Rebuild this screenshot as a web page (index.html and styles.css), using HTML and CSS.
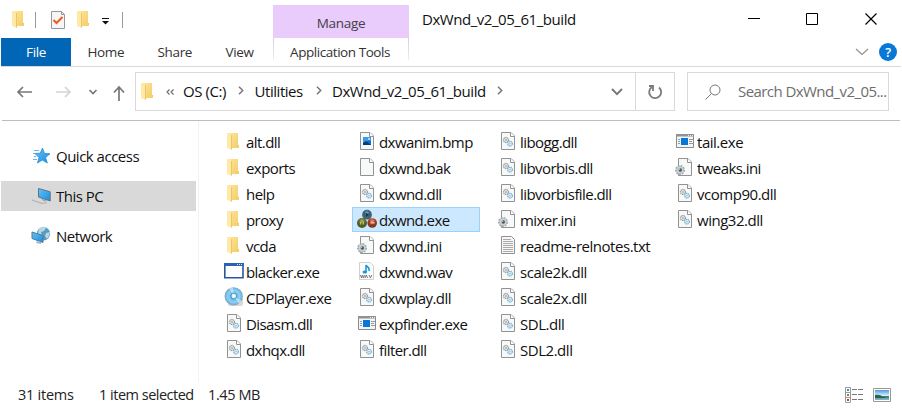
FILE: index.html
```html
<!DOCTYPE html>
<html lang="en">
<head>
<meta charset="utf-8">
<title>DxWnd_v2_05_61_build</title>
<link rel="stylesheet" href="styles.css">
</head>
<body>
<svg class="defs" width="0" height="0">
  <defs>
    <linearGradient id="gold" x1="0" x2="1" y1="0" y2="1"><stop offset="0" stop-color="#ffe599"/><stop offset="1" stop-color="#f3cc65"/></linearGradient>
    <linearGradient id="blue" x1="0" x2="1" y1="0" y2="1"><stop offset="0" stop-color="#5fc4f8"/><stop offset="1" stop-color="#1e8be0"/></linearGradient>
    <radialGradient id="disc"><stop offset="0" stop-color="#fff"/><stop offset=".3" stop-color="#5fb4e6"/><stop offset=".65" stop-color="#8fd0f4"/><stop offset="1" stop-color="#6fa5c4"/></radialGradient>
    <radialGradient id="b1" cy=".3"><stop offset="0" stop-color="#7ba6c0"/><stop offset=".55" stop-color="#31607c"/><stop offset="1" stop-color="#4a6272"/></radialGradient>
    <radialGradient id="b2" cy=".3"><stop offset="0" stop-color="#b0b080"/><stop offset=".6" stop-color="#5f6e22"/><stop offset="1" stop-color="#4f5a2c"/></radialGradient>
    <radialGradient id="b3" cy=".3"><stop offset="0" stop-color="#e09a86"/><stop offset=".6" stop-color="#b33d1c"/><stop offset="1" stop-color="#7c3a28"/></radialGradient>
    <linearGradient id="sky" x1="0" x2="0" y1="0" y2="1"><stop offset="0" stop-color="#4f9be0"/><stop offset=".55" stop-color="#d5ecf8"/><stop offset=".6" stop-color="#3d7a62"/><stop offset="1" stop-color="#8db9d8"/></linearGradient>
  </defs>
  <symbol id="folder" viewBox="0 0 20 20"><path d="M5 2h9v12h1v3H7z" fill="url(#gold)"/><path d="M3 2h2l3 2v15l-5-2z" fill="#ffe9a6"/><path d="M7.500 4v14.500M14 14.500h1" stroke="#e8c66c" fill="none"/></symbol>
  <symbol id="sheet" viewBox="0 0 20 20"><path d="M3.500 1.500h9.500l3.500 3.500v13.500h-13z" fill="#f7f8f8" stroke="#929292"/><path d="M12.500 1.500v4h4" fill="#fff" stroke="#929292"/></symbol>
  <symbol id="dll" viewBox="0 0 20 20"><use href="#sheet"/><circle cx="8" cy="9" r="2.500" fill="#e8eaec" stroke="#959da2" stroke-width="1.300" stroke-dasharray="1.300 .5"/><circle cx="8" cy="9" r=".8" fill="#888"/><circle cx="12" cy="12.700" r="2.300" fill="#edf6fb" stroke="#75aed0" stroke-width="1.300" stroke-dasharray="1.200 .5"/><circle cx="12" cy="12.700" r=".7" fill="#75a5c0"/></symbol>
  <symbol id="bmp" viewBox="0 0 20 20"><use href="#sheet"/><path d="M6 6h8v8H6z" fill="#1471c8"/><path d="M6 6h8v4l-2-1-3 2-3 1z" fill="#3b9bea"/><path d="M6 14v-2l3-2 5 4z" fill="#083d76"/><circle cx="12" cy="8" r="1" fill="#cdefff"/></symbol>
  <symbol id="ini" viewBox="0 0 20 20"><use href="#sheet"/><circle cx="5" cy="13" r="4" fill="#c3cbd0" stroke="#9ca7ae" stroke-width="2" stroke-dasharray="1.700 1"/><circle cx="5" cy="13" r="3.500" fill="#c9d0d4"/><circle cx="5.300" cy="13" r="1.700" fill="#4c5459"/><circle cx="4.600" cy="12.300" r=".7" fill="#ccc"/></symbol>
  <symbol id="txt" viewBox="0 0 20 20"><path d="M3.500 1.500h10l3 3v14h-13z" fill="#f7f7f7" stroke="#929292"/><path d="M5 4.500h8M5 6.500h10M5 8.500h10M5 10.500h10M5 12.500h10M5 14.500h10M5 16.500h10" stroke="#aaa"/></symbol>
  <symbol id="wav" viewBox="0 0 20 20"><path d="M2.500 1.500h10.500l3.500 3.500v13.500h-14z" fill="#fbfbfb" stroke="#d0d0d0"/><path d="M9 11V4c.5 2 4 2 3 6" fill="none" stroke="#1593dc" stroke-width="1.500"/><ellipse cx="7.800" cy="11" rx="2.200" ry="1.600" fill="#1695e0"/><path d="M3.500 14l1 3 1-3 1 3 1-3M8 17l1.300-3 1.300 3M12 14l1.400 3 1.400-3" fill="none" stroke="#777"/></symbol>
  <symbol id="exe" viewBox="0 0 20 20"><path d="M1.500 3.500h17v13h-17z" fill="#f4f5f6" stroke="#858b8f"/><path d="M1 3h18v2.500H1z" fill="#8c9296"/><path d="M13 4.500h1M15 4.500h1M17 4.500h1" stroke="#eee"/><path d="M6 7h7v7H6z" fill="#0878d8"/><path d="M3 8.500h2M3 10.500h2M3 12.500h2M14 8.500h4M14 10.500h3M14 12.500h4" stroke="#999"/></symbol>
  <symbol id="win" viewBox="0 0 20 20"><path d="M.8 2.800h18.200v14H.8z" fill="#fff" stroke="#27589f" stroke-width="1.600"/><path d="M0 2h20v3H0z" fill="#2863b5"/><path d="M13 3.500h1M15 3.500h1M17 3.500h1" stroke="#d8e8fa"/></symbol>
  <symbol id="cd" viewBox="0 0 20 20"><rect x="4" y="10" width="15" height="9" rx="2" fill="#dcd9d5"/><circle cx="9.700" cy="9.300" r="9.100" fill="url(#disc)"/><path d="M10 9L5 1.500A9 9 0 0 1 9 .3zM10 9l8 5a9 9 0 0 1-3 3z" fill="#c4e8fb" opacity=".7"/><circle cx="9.800" cy="9" r="2.800" fill="#e2f3fc" stroke="#479acc"/><circle cx="9.800" cy="9" r="1" fill="#fff"/></symbol>
  <symbol id="balls" viewBox="0 0 20 20"><circle cx="10" cy="5.700" r="4.900" fill="url(#b1)"/><circle cx="5" cy="14" r="5" fill="url(#b2)"/><circle cx="15.200" cy="14" r="4.800" fill="url(#b3)"/><path d="M9 3.800v4l3-2z" fill="#17394e"/><path d="M3.700 12.500v3M6.300 12.500v3" stroke="#c9cd75"/><path d="M13.500 13.800h4" stroke="#f0bba9" stroke-width="1.500"/></symbol>
  <symbol id="star" viewBox="0 0 20 20"><path d="M11.500 2l2 5.500 5.500.2-4.400 3.800 1.700 5.500-5-3-4.800 3 1.500-5.500-4-4 5.200-.3z" fill="url(#blue)" stroke="#258bd0" stroke-width=".8"/><path d="M3 4.500h5M2 7.500h2M3 10.500h2M2 13.500h4" stroke="#62b9ed"/></symbol>
  <symbol id="pc" viewBox="0 0 20 20"><path d="M7.500 2.500l11.700 3.300v9.200L7.500 11z" fill="url(#blue)" stroke="#5d7487"/><path d="M11 13.500l4 1.500" stroke="#8b9aa4"/><path d="M1 14l10 3.500 5-1" fill="none" stroke="#a9b0b4" stroke-width="1.300" stroke-dasharray="2 .5"/></symbol>
  <symbol id="net" viewBox="0 0 20 20"><circle cx="12.500" cy="7.700" r="6.700" fill="#5a9abc"/><path d="M8 3q4-4 7-1l-2 3-3 1 1 3-4-1zM15 7l4-1q0 4-3 7l-2-3z" fill="#b6d7e3"/><path d="M1 6l11 3.500v7L1 12.500z" fill="url(#blue)" stroke="#557b98"/><path d="M6 15l-1 2 5 1v-2" fill="#abb6bd"/></symbol>
</svg>

<div class="window">
  <header class="top">
    <div class="titlebar">
      <div class="quick">
        <svg class="q-folder" width="20" height="20"><use href="#folder"/></svg>
        <i class="sep"></i>
        <svg class="q-check" width="14" height="18" viewBox="0 0 14 18"><path d="M.5.500h10l3 3v14H.5z" fill="#f5f6f7" stroke="#989898"/><path d="M10.500.500v3h3" fill="none" stroke="#989898"/><path d="M2.500 9l3 3L11.500 6" fill="none" stroke="#ee5a1c" stroke-width="2"/></svg>
        <svg class="q-folder2" width="20" height="20"><use href="#folder"/></svg>
        <svg class="q-more" width="7" height="7" viewBox="0 0 7 7"><path d="M0 .5h7" stroke="#111"/><path d="M0 3h7L3.500 6.500z" fill="#111"/></svg>
        <i class="sep"></i>
      </div>
      <div class="manage"><span>Manage</span></div>
      <h1 class="title">DxWnd_v2_05_61_build</h1>
      <svg class="winctl" width="130" height="14" viewBox="0 0 130 14" fill="none" stroke="#000"><path d="M0 6.500h12"/><path d="M58.500 1.500h11v11h-11z"/><path d="M117.500 1.500l11 11m0-11l-11 11" stroke-width="1.200"/></svg>
    </div>
    <nav class="tabs">
      <span class="tab file">File</span><span class="tab home">Home</span><span class="tab share">Share</span><span class="tab view">View</span><span class="tab tools">Application Tools</span>
      <svg class="ribbon-toggle" width="14" height="8" viewBox="0 0 14 8"><path d="M1 1l6 5.500L13 1" fill="none" stroke="#929292" stroke-width="1.200"/></svg>
      <span class="help">?</span>
    </nav>
  </header>

  <div class="navrow">
    <svg class="arrows" width="112" height="20" viewBox="0 0 112 20" fill="none" stroke-width="1.700"><path d="M16 10H2M7 5L2 10l5 5" stroke="#777"/><path d="M40 10h14M49 5l5 5-5 5" stroke="#d4d4d4"/><path d="M73.500 8l3.500 3.500L80.500 8" stroke="#777"/><path d="M103 19V5M98 10.500l5-5.500 5 5.500" stroke="#777"/></svg>
    <div class="address">
      <svg class="a-folder" width="20" height="20"><use href="#folder"/></svg>
      <svg class="a-back" width="8" height="6" viewBox="0 0 8 6" fill="none" stroke="#666" stroke-width="1.100"><path d="M3.500.5L1 3l2.500 2.500M7.500.5L5 3l2.500 2.500"/></svg>
      <span class="crumb c1">OS (C:)</span>
      <svg class="chev" width="6" height="9" viewBox="0 0 6 9"><path d="M1 .8l3.700 3.700L1 8.200" fill="none" stroke="#777" stroke-width="1.500"/></svg>
      <span class="crumb c2">Utilities</span>
      <svg class="chev" width="6" height="9" viewBox="0 0 6 9"><path d="M1 .8l3.700 3.700L1 8.200" fill="none" stroke="#777" stroke-width="1.500"/></svg>
      <span class="crumb c3">DxWnd_v2_05_61_build</span>
      <svg class="chev" width="6" height="9" viewBox="0 0 6 9"><path d="M1 .8l3.700 3.700L1 8.200" fill="none" stroke="#777" stroke-width="1.500"/></svg>
      <svg class="drop" width="12" height="8" viewBox="0 0 12 8"><path d="M1 1l5 5.200L11 1" fill="none" stroke="#777" stroke-width="1.900"/></svg>
      <span class="refresh"><svg width="16" height="16" viewBox="0 0 16 16" fill="none" stroke="#7b7b7b" stroke-width="1.800"><path d="M12 3.500a6 6 0 1 1-7-.5"/><path d="M2 2h4v5"/></svg></span>
    </div>
    <div class="search"><svg width="16" height="16" viewBox="0 0 16 16" fill="none" stroke="#777"><circle cx="10" cy="6" r="5"/><path d="M6.500 9.500L.5 15.500"/></svg><span>Search DxWnd_v2_05...</span></div>
  </div>

  <main class="body">
    <aside class="side">
      <div class="place"><svg width="20" height="20"><use href="#star"/></svg><span>Quick access</span></div>
      <div class="place active"><svg width="20" height="20"><use href="#pc"/></svg><span>This PC</span></div>
      <div class="place"><svg width="20" height="20"><use href="#net"/></svg><span>Network</span></div>
    </aside>
    <section class="files">
      <div class="file-item"><svg><use href="#folder"/></svg><span>alt.dll</span></div>
      <div class="file-item"><svg><use href="#folder"/></svg><span>exports</span></div>
      <div class="file-item"><svg><use href="#folder"/></svg><span>help</span></div>
      <div class="file-item"><svg><use href="#folder"/></svg><span>proxy</span></div>
      <div class="file-item"><svg><use href="#folder"/></svg><span>vcda</span></div>
      <div class="file-item"><svg><use href="#win"/></svg><span>blacker.exe</span></div>
      <div class="file-item"><svg><use href="#cd"/></svg><span>CDPlayer.exe</span></div>
      <div class="file-item"><svg><use href="#dll"/></svg><span>Disasm.dll</span></div>
      <div class="file-item"><svg><use href="#dll"/></svg><span>dxhqx.dll</span></div>
      <div class="file-item"><svg><use href="#bmp"/></svg><span>dxwanim.bmp</span></div>
      <div class="file-item"><svg><use href="#sheet"/></svg><span>dxwnd.bak</span></div>
      <div class="file-item"><svg><use href="#dll"/></svg><span>dxwnd.dll</span></div>
      <div class="file-item selected"><svg><use href="#balls"/></svg><span>dxwnd.exe</span></div>
      <div class="file-item"><svg><use href="#ini"/></svg><span>dxwnd.ini</span></div>
      <div class="file-item"><svg><use href="#wav"/></svg><span>dxwnd.wav</span></div>
      <div class="file-item"><svg><use href="#dll"/></svg><span>dxwplay.dll</span></div>
      <div class="file-item"><svg><use href="#exe"/></svg><span>expfinder.exe</span></div>
      <div class="file-item"><svg><use href="#dll"/></svg><span>filter.dll</span></div>
      <div class="file-item"><svg><use href="#dll"/></svg><span>libogg.dll</span></div>
      <div class="file-item"><svg><use href="#dll"/></svg><span>libvorbis.dll</span></div>
      <div class="file-item"><svg><use href="#dll"/></svg><span>libvorbisfile.dll</span></div>
      <div class="file-item"><svg><use href="#ini"/></svg><span>mixer.ini</span></div>
      <div class="file-item"><svg><use href="#txt"/></svg><span class="wide">readme-relnotes.txt</span></div>
      <div class="file-item"><svg><use href="#dll"/></svg><span class="wide">scale2k.dll</span></div>
      <div class="file-item"><svg><use href="#dll"/></svg><span class="wide">scale2x.dll</span></div>
      <div class="file-item"><svg><use href="#dll"/></svg><span class="wide">SDL.dll</span></div>
      <div class="file-item"><svg><use href="#dll"/></svg><span class="wide">SDL2.dll</span></div>
      <div class="file-item"><svg><use href="#exe"/></svg><span class="wide">tail.exe</span></div>
      <div class="file-item"><svg><use href="#ini"/></svg><span>tweaks.ini</span></div>
      <div class="file-item"><svg><use href="#dll"/></svg><span class="wide">vcomp90.dll</span></div>
      <div class="file-item"><svg><use href="#dll"/></svg><span class="wide">wing32.dll</span></div>
    </section>
  </main>

  <footer class="status">
    <span class="s1">31 items</span><span class="s2">1 item selected</span><span class="s3">1.45 MB</span>
    <svg class="views" width="46" height="17" viewBox="0 0 46 17"><path d="M.5.500h5v15h-5zM.5 5.500h5M.5 10.500h5" fill="#fff" stroke="#999"/><path d="M2 3h2" stroke="#3f87c8" stroke-width="2"/><path d="M2 8h2" stroke="#8a8a2d" stroke-width="2"/><path d="M2 13h2" stroke="#c83c20" stroke-width="2"/><path d="M7 2.500h5M13 2.500h5M7 7.500h5M13 7.500h5M7 12.500h5M13 12.500h5" stroke="#777"/><path d="M28.500 1.500h17v13h-17z" fill="#fff" stroke="#999"/><path d="M30 3h14v10H30z" fill="url(#sky)"/><path d="M30 8q5-1 8 2l6 1H30z" fill="#286452"/></svg>
  </footer>
</div>
</body>
</html>
```

FILE: styles.css
```css
* { box-sizing: border-box; }
body { margin: 0; background: #fff; font-family: "Open Sans", "Noto Sans", sans-serif; font-size: 15px; letter-spacing: -0.57px; color: #111; }
svg { display: block; flex: none; }
span { white-space: nowrap; }
.defs { position: absolute; }
.window { width: 902px; height: 410px; overflow: hidden; display: flex; flex-direction: column; }

.titlebar { display: flex; height: 38px; }
.quick { display: flex; width: 273px; align-items: flex-start; padding: 9px 0 0 9px; }
.sep { width: 1px; height: 16px; background: #999; margin-top: 3px; }
.q-folder { margin-right: 6px; }
.q-check { margin: 2px 0 0 15px; }
.q-folder2 { margin-left: 9px; }
.q-more { margin: 9px 13px 0 8px; }
.manage { width: 136px; height: 33px; margin-top: 5px; background: #e9cbfc; display: flex; align-items: center; justify-content: center; font-size: 13.5px; letter-spacing: -0.3px; color: #443d4a; padding-top: 2px; }
.title { margin: 9px 0 0 13px; font-size: 15px; line-height: 20px; font-weight: 400; letter-spacing: -0.45px; }
.winctl { margin: 12px 24px 0 auto; }

.tabs { display: flex; height: 29px; border-bottom: 1px solid #d9d9d9; font-size: 13.5px; line-height: 28px; letter-spacing: -0.35px; color: #333; margin: 0 1px; }
.file { width: 70px; background: #0066b5; color: #fff; text-align: center; }
.home { margin-left: 16.5px; width: 70px; }
.share { width: 68px; }
.view { width: 47.5px; }
.tools { width: 136px; height: 22px; text-align: center; border: solid #d0d0d0; border-width: 0 1px; border-image: linear-gradient(#d0d0d0, #f0f0f0) 1; letter-spacing: -0.45px; padding-right: 2px; }
.ribbon-toggle { margin: 10px 10px 0 auto; }
.help { width: 18px; height: 18px; margin: 5px 4px 0 0; border-radius: 50%; background: #0878d6; color: #fff; text-align: center; font-size: 13px; line-height: 18px; font-weight: 600; }

.navrow { display: flex; height: 54px; padding: 5px 0 0 15px; border-bottom: 1px solid #bdbdbd; margin: 0 2px; }
.arrows { margin: 10px 6px 0 -1px; }
.address { width: 540px; height: 39px; margin-left: 1px; border: 1px solid #d9d9d9; display: flex; align-items: center; }
.a-folder { margin: -2px 8px 0 2px; }
.a-back { margin-right: 9px; }
.crumb { line-height: 38px; letter-spacing: -0.45px; margin-top: -2px; }
.c1 { width: 55px; }
.c2 { width: 61px; }
.c3 { width: 165px; }
.chev { margin-right: 10.5px; margin-top: -2px; }
.c3 + .chev { margin-right: 0; }
.drop { margin-left: auto; margin-right: 12px; }
.refresh { width: 39px; height: 37px; border-left: 1px solid #d9d9d9; display: flex; align-items: center; justify-content: center; }
.search { width: 202px; height: 39px; margin-left: 12px; border: 1px solid #d9d9d9; display: flex; align-items: center; padding-left: 17px; color: #6d6d6d; overflow: hidden; }
.search span { margin-left: 17px; margin-top: -2px; }

.body { display: flex; height: 261px; }
.side { width: 199px; border-right: 1px solid #f1f1f1; padding: 20px 2px 0 1px; }
.place { height: 30px; margin-bottom: 10px; padding-left: 30px; display: flex; align-items: center; gap: 5px; letter-spacing: -0.5px; }
.active { background: #d9d9d9; }
.files { display: grid; grid-template-columns: 133px 141px 177px 130px; grid-template-rows: repeat(9, 26px); grid-auto-flow: column; padding: 8px 0 0 20px; }
.file-item { height: 25px; display: flex; align-items: center; gap: 2px; padding: 0 0 0 4px; border: 1px solid transparent; }
.file-item svg { width: 20px; height: 20px; margin-top: -1px; }
.file-item .wide { letter-spacing: -0.47px; }
.selected { width: 128px; background: #cce8ff; border-color: #99d1ff; }

.status { display: flex; height: 26px; align-items: center; padding: 0 11px 0 18px; font-size: 14.5px; letter-spacing: -0.25px; color: #222; }
.status span { margin-top: -1px; }
.s1 { width: 81px; }
.s2 { width: 109px; letter-spacing: -0.5px; }
.s3 { letter-spacing: -0.4px; }
.views { margin-left: auto; }
```
